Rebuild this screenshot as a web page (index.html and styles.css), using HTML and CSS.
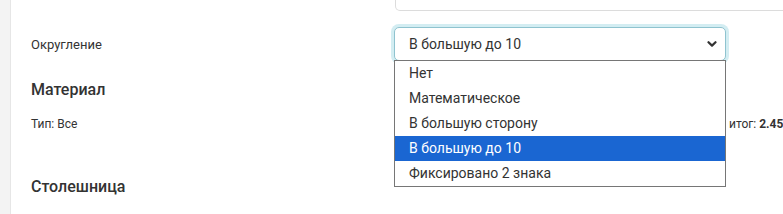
FILE: index.html
```html
<!DOCTYPE html>
<html lang="ru">

<head>
  <meta charset="UTF-8">
  <meta name="viewport" content="width=device-width, initial-scale=1.0">
  <title>Калькулятор</title>
  <link rel="stylesheet" href="styles.css">
</head>

<body>

  <div class="card">
    <div class="form-row prev-row">
      <div class="form-label"></div>
      <div class="form-field">
        <div class="input-tail"></div>
      </div>
    </div>

    <div class="form-row">
      <div class="form-label">Округление</div>
      <div class="form-field">
        <div class="select-box">
          <span>В большую до 10</span>
          <svg class="chevron" width="10" height="8" viewBox="0 0 10 8">
            <path d="M1.5 2.2 L5 5.6 L8.5 2.2" fill="none" stroke="#333" stroke-width="2.2" stroke-linecap="round" stroke-linejoin="round"/>
          </svg>
        </div>
        <ul class="options">
          <li>Нет</li>
          <li>Математическое</li>
          <li>В большую сторону</li>
          <li class="selected">В большую до 10</li>
          <li>Фиксировано 2 знака</li>
        </ul>
      </div>
    </div>

    <h3 class="section-title">Материал</h3>
    <div class="info-row">
      <div class="info-type">Тип: Все</div>
      <div class="info-gap"></div>
      <div class="info-total">итог: <b>2.45</b></div>
    </div>

    <h3 class="section-title second">Столешница</h3>
  </div>

</body>

</html>
```

FILE: styles.css
```css
* {
  margin: 0;
  padding: 0;
  box-sizing: border-box;
}

body {
  font-family: Roboto, 'Liberation Sans', sans-serif;
  background-color: #f3f3f3;
  color: #333;
  width: 783px;
  height: 214px;
  overflow: hidden;
}

.card {
  margin-left: 10px;
  width: 773px;
  height: 214px;
  overflow: hidden;
  background-color: #fff;
  border-left: 1px solid #e6e6e6;
  padding-left: 20px;
}

.form-row {
  display: flex;
  align-items: center;
  margin-top: 16px;
}

.prev-row {
  margin-top: 0;
}

.form-label {
  width: 363px;
  flex-shrink: 0;
  font-size: 13px;
}

.form-field {
  position: relative;
}

.input-tail {
  width: 400px;
  height: 11px;
  margin-left: 1px;
  border: 1px solid #dcdcdc;
  border-top: none;
  border-radius: 0 0 5px 5px;
}

.select-box {
  width: 332px;
  height: 34px;
  display: flex;
  align-items: center;
  justify-content: space-between;
  padding: 0 8px 0 14px;
  font-size: 14px;
  border: 1px solid #8fc3cf;
  border-radius: 5px;
  box-shadow: 0 0 0 3px #d3edf2;
  background-color: #fff;
}

.chevron {
  display: block;
}

.options {
  list-style: none;
  position: absolute;
  top: 33px;
  left: 0;
  width: 332px;
  background-color: #fff;
  border: 1px solid #767676;
  z-index: 5;
}

.options li {
  height: 25px;
  line-height: 25px;
  padding-left: 14px;
  font-size: 14px;
  color: #333;
}

.options li.selected {
  background-color: #1a66d2;
  color: #fff;
}

.section-title {
  font-size: 16px;
  font-weight: 500;
  line-height: 20px;
  margin-top: 19px;
}

.section-title.second {
  margin-top: 45px;
}

.info-row {
  display: flex;
  font-size: 12px;
  line-height: 16px;
  margin-top: 16px;
}

.info-type {
  width: 363px;
  flex-shrink: 0;
}

.info-gap {
  width: 335px;
  flex-shrink: 0;
}

.info-total {
  white-space: nowrap;
}

.info-total b {
  font-weight: 700;
}
```
